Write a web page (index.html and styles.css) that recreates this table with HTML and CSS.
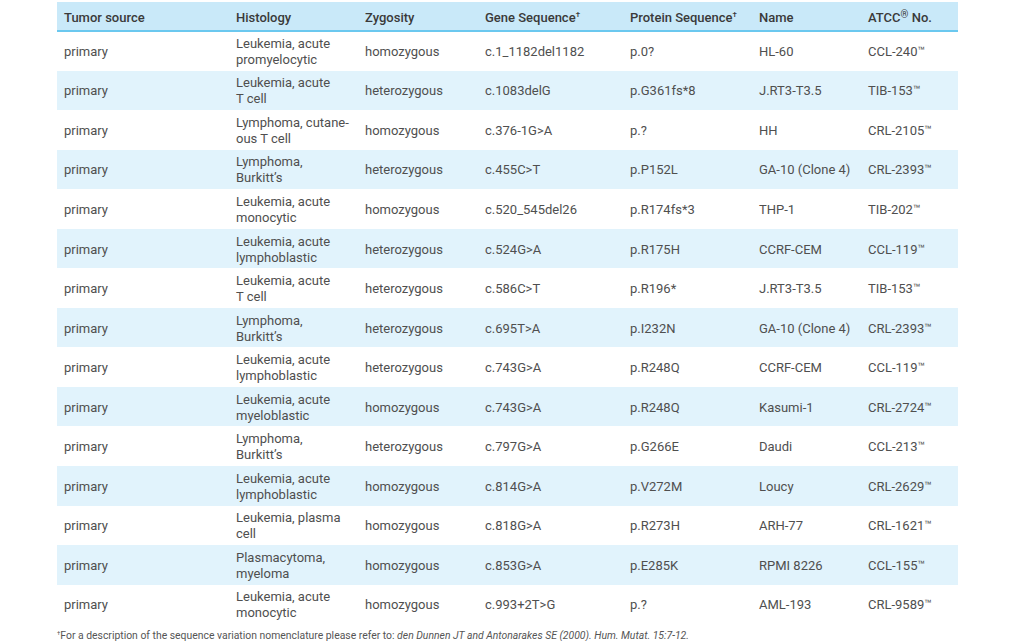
FILE: index.html
```html
<!DOCTYPE html>
<html>
<head>
<meta charset="utf-8">
<link rel="stylesheet" href="styles.css">
</head>
<body>
<div class="page">
<table class="mut">
<colgroup>
<col class="c1"><col class="c2"><col class="c3"><col class="c4"><col class="c5"><col class="c6"><col class="c7">
</colgroup>
<thead>
<tr><th>Tumor source</th><th>Histology</th><th>Zygosity</th><th>Gene Sequence<sup>†</sup></th><th>Protein Sequence<sup>†</sup></th><th>Name</th><th>ATCC<sup class="reg">®</sup> No.</th></tr>
</thead>
<tbody>
<tr><td>primary</td><td>Leukemia, acute<br>promyelocytic</td><td>homozygous</td><td>c.1_1182del1182</td><td>p.0?</td><td>HL-60</td><td>CCL-240<span class="tm">™</span></td></tr>
<tr><td>primary</td><td>Leukemia, acute<br>T cell</td><td>heterozygous</td><td>c.1083delG</td><td>p.G361fs*8</td><td>J.RT3-T3.5</td><td>TIB-153<span class="tm">™</span></td></tr>
<tr><td>primary</td><td>Lymphoma, cutane-<br>ous T cell</td><td>homozygous</td><td>c.376-1G&gt;A</td><td>p.?</td><td>HH</td><td>CRL-2105<span class="tm">™</span></td></tr>
<tr><td>primary</td><td>Lymphoma,<br>Burkitt’s</td><td>heterozygous</td><td>c.455C&gt;T</td><td>p.P152L</td><td>GA-10 (Clone 4)</td><td>CRL-2393<span class="tm">™</span></td></tr>
<tr><td>primary</td><td>Leukemia, acute<br>monocytic</td><td>homozygous</td><td>c.520_545del26</td><td>p.R174fs*3</td><td>THP-1</td><td>TIB-202<span class="tm">™</span></td></tr>
<tr><td>primary</td><td>Leukemia, acute<br>lymphoblastic</td><td>heterozygous</td><td>c.524G&gt;A</td><td>p.R175H</td><td>CCRF-CEM</td><td>CCL-119<span class="tm">™</span></td></tr>
<tr><td>primary</td><td>Leukemia, acute<br>T cell</td><td>heterozygous</td><td>c.586C&gt;T</td><td>p.R196*</td><td>J.RT3-T3.5</td><td>TIB-153<span class="tm">™</span></td></tr>
<tr><td>primary</td><td>Lymphoma,<br>Burkitt’s</td><td>heterozygous</td><td>c.695T&gt;A</td><td>p.I232N</td><td>GA-10 (Clone 4)</td><td>CRL-2393<span class="tm">™</span></td></tr>
<tr><td>primary</td><td>Leukemia, acute<br>lymphoblastic</td><td>heterozygous</td><td>c.743G&gt;A</td><td>p.R248Q</td><td>CCRF-CEM</td><td>CCL-119<span class="tm">™</span></td></tr>
<tr><td>primary</td><td>Leukemia, acute<br>myeloblastic</td><td>homozygous</td><td>c.743G&gt;A</td><td>p.R248Q</td><td>Kasumi-1</td><td>CRL-2724<span class="tm">™</span></td></tr>
<tr><td>primary</td><td>Lymphoma,<br>Burkitt’s</td><td>heterozygous</td><td>c.797G&gt;A</td><td>p.G266E</td><td>Daudi</td><td>CCL-213<span class="tm">™</span></td></tr>
<tr><td>primary</td><td>Leukemia, acute<br>lymphoblastic</td><td>homozygous</td><td>c.814G&gt;A</td><td>p.V272M</td><td>Loucy</td><td>CRL-2629<span class="tm">™</span></td></tr>
<tr><td>primary</td><td>Leukemia, plasma<br>cell</td><td>homozygous</td><td>c.818G&gt;A</td><td>p.R273H</td><td>ARH-77</td><td>CRL-1621<span class="tm">™</span></td></tr>
<tr><td>primary</td><td>Plasmacytoma,<br>myeloma</td><td>homozygous</td><td>c.853G&gt;A</td><td>p.E285K</td><td>RPMI 8226</td><td>CCL-155<span class="tm">™</span></td></tr>
<tr><td>primary</td><td>Leukemia, acute<br>monocytic</td><td>homozygous</td><td>c.993+2T&gt;G</td><td>p.?</td><td>AML-193</td><td>CRL-9589<span class="tm">™</span></td></tr>
</tbody>
</table>
<p class="note"><sup>†</sup>For a description of the sequence variation nomenclature please refer to: <em>den Dunnen JT and Antonarakes SE (2000). Hum. Mutat. 15:7-12.</em></p>
</div>
</body>
</html>
```
FILE: styles.css
```css
html, body {
  margin: 0;
  padding: 0;
  background: #ffffff;
}
body {
  font-family: Roboto, "Liberation Sans", sans-serif;
  color: #4f4f4f;
}
.page {
  padding: 2px 0 0 57px;
}
.mut {
  width: 901px;
  border-collapse: collapse;
  table-layout: fixed;
  font-size: 13px;
}
.c1 { width: 172px; }
.c2 { width: 129px; }
.c3 { width: 120px; }
.c4 { width: 145px; }
.c5 { width: 129px; }
.c6 { width: 109px; }
.c7 { width: 97px; }
.mut th {
  background: #c9e9f9;
  border-bottom: 2px solid #6bc8ef;
  height: 29px;
  padding: 2px 0 0 7px;
  box-sizing: border-box;
  text-align: left;
  font-weight: 500;
  color: #3a3a3a;
  vertical-align: middle;
}
.mut td {
  height: 39.55px;
  padding: 2px 0 0 7px;
  line-height: 16px;
  vertical-align: middle;
  box-sizing: border-box;
}
.mut tbody tr:nth-child(even) td {
  background: #e1f3fc;
}
.mut sup {
  font-size: 8px;
  vertical-align: top;
  line-height: 1;
  position: relative;
  top: 1px;
}
.mut sup.reg {
  font-size: 10px;
  top: 0;
}
.tm {
  font-size: 12px;
  position: relative;
  top: -1px;
}
.note {
  margin: 5px 0 0 0;
  font-size: 10.4px;
  color: #555;
}
.note sup {
  font-size: 6px;
  vertical-align: top;
}
```
